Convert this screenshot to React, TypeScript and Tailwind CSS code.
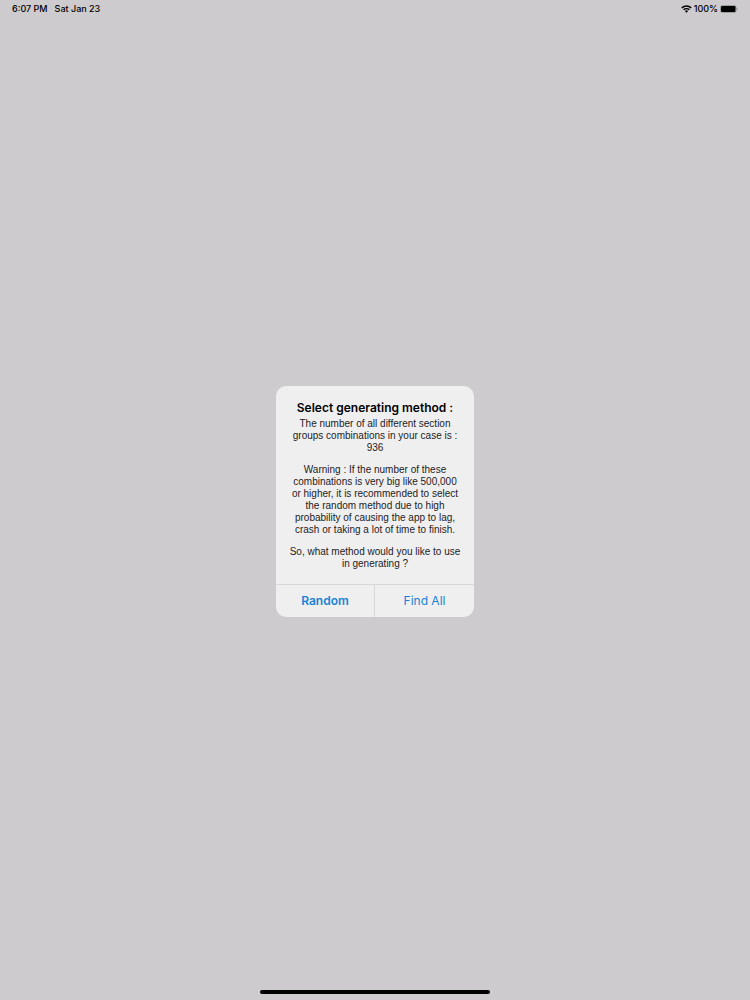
const paragraphs = [
  'The number of all different section groups combinations in your case is : 936',
  'Warning : If the number of these combinations is very big like 500,000 or higher, it is recommended to select the random method due to high probability of causing the app to lag, crash or taking a lot of time to finish.',
  'So, what method would you like to use in generating ?',
];

const WifiIcon = () => (
  <svg viewBox="0 0 20 15" className="h-[8px] w-[11px]" aria-hidden="true">
    <g fill="none" stroke="#000" strokeWidth="2.8">
      <path d="M1.2 5.4a12.6 12.6 0 0 1 17.6 0" />
      <path d="M4.6 9a7.8 7.8 0 0 1 10.8 0" />
    </g>
    <path d="M10 14.6 6.9 11.4a4.5 4.5 0 0 1 6.2 0Z" />
  </svg>
);

const BatteryIcon = () => (
  <svg viewBox="0 0 36 16" className="h-[8px] w-[18px]" aria-hidden="true">
    <rect x="0.8" y="0.8" width="31.4" height="14.4" rx="4.4" fill="none" stroke="#858386" strokeWidth="1.4" />
    <rect x="2" y="2" width="29" height="12" rx="2.6" />
    <path d="M33.6 5.4c2 .8 2 4.4 0 5.2Z" fill="#858386" />
  </svg>
);

const StatusBar = () => (
  <header className="flex h-[18px] items-center justify-between px-3 text-[9px] leading-[18px] font-medium">
    <div className="flex gap-[7px]">
      <span>6:07 PM</span>
      <span>Sat Jan 23</span>
    </div>
    <div className="flex items-center gap-[2px]">
      <WifiIcon />
      <span>100%</span>
      <BatteryIcon />
    </div>
  </header>
);

const MethodDialog = () => (
  <div
    role="alertdialog"
    aria-labelledby="dialog-title"
    aria-describedby="dialog-message"
    className="w-[198px] overflow-hidden rounded-[10px] bg-[#f0eff0] text-center"
  >
    <div className="px-[13px] pt-[14px] pb-[14px]">
      <h1 id="dialog-title" className="text-[12px] leading-[16px] font-semibold whitespace-nowrap">
        Select generating method :
      </h1>
      <div
        id="dialog-message"
        className="mt-[2px] flex flex-col gap-[10px] font-['Liberation_Sans',sans-serif] text-[10px] leading-[12px] text-[#1c1c1d]"
      >
        {paragraphs.map((text) => (
          <p key={text}>{text}</p>
        ))}
      </div>
    </div>
    <div className="grid grid-cols-2 border-t border-[#d8d7d9] text-[12px] leading-[32px] text-[#1683d8]">
      <button className="border-r border-[#d8d7d9] font-semibold">Random</button>
      <button>Find All</button>
    </div>
  </div>
);

export default function App() {
  return (
    <div className="flex min-h-screen flex-col bg-[#cdcbcd] font-[Inter,sans-serif] text-black">
      <StatusBar />
      <main className="flex flex-1 items-center justify-center">
        <MethodDialog />
      </main>
      <footer className="flex h-[15px] justify-center pt-[5px]">
        <div className="h-1 w-[230px] rounded-full bg-black" />
      </footer>
    </div>
  );
}
